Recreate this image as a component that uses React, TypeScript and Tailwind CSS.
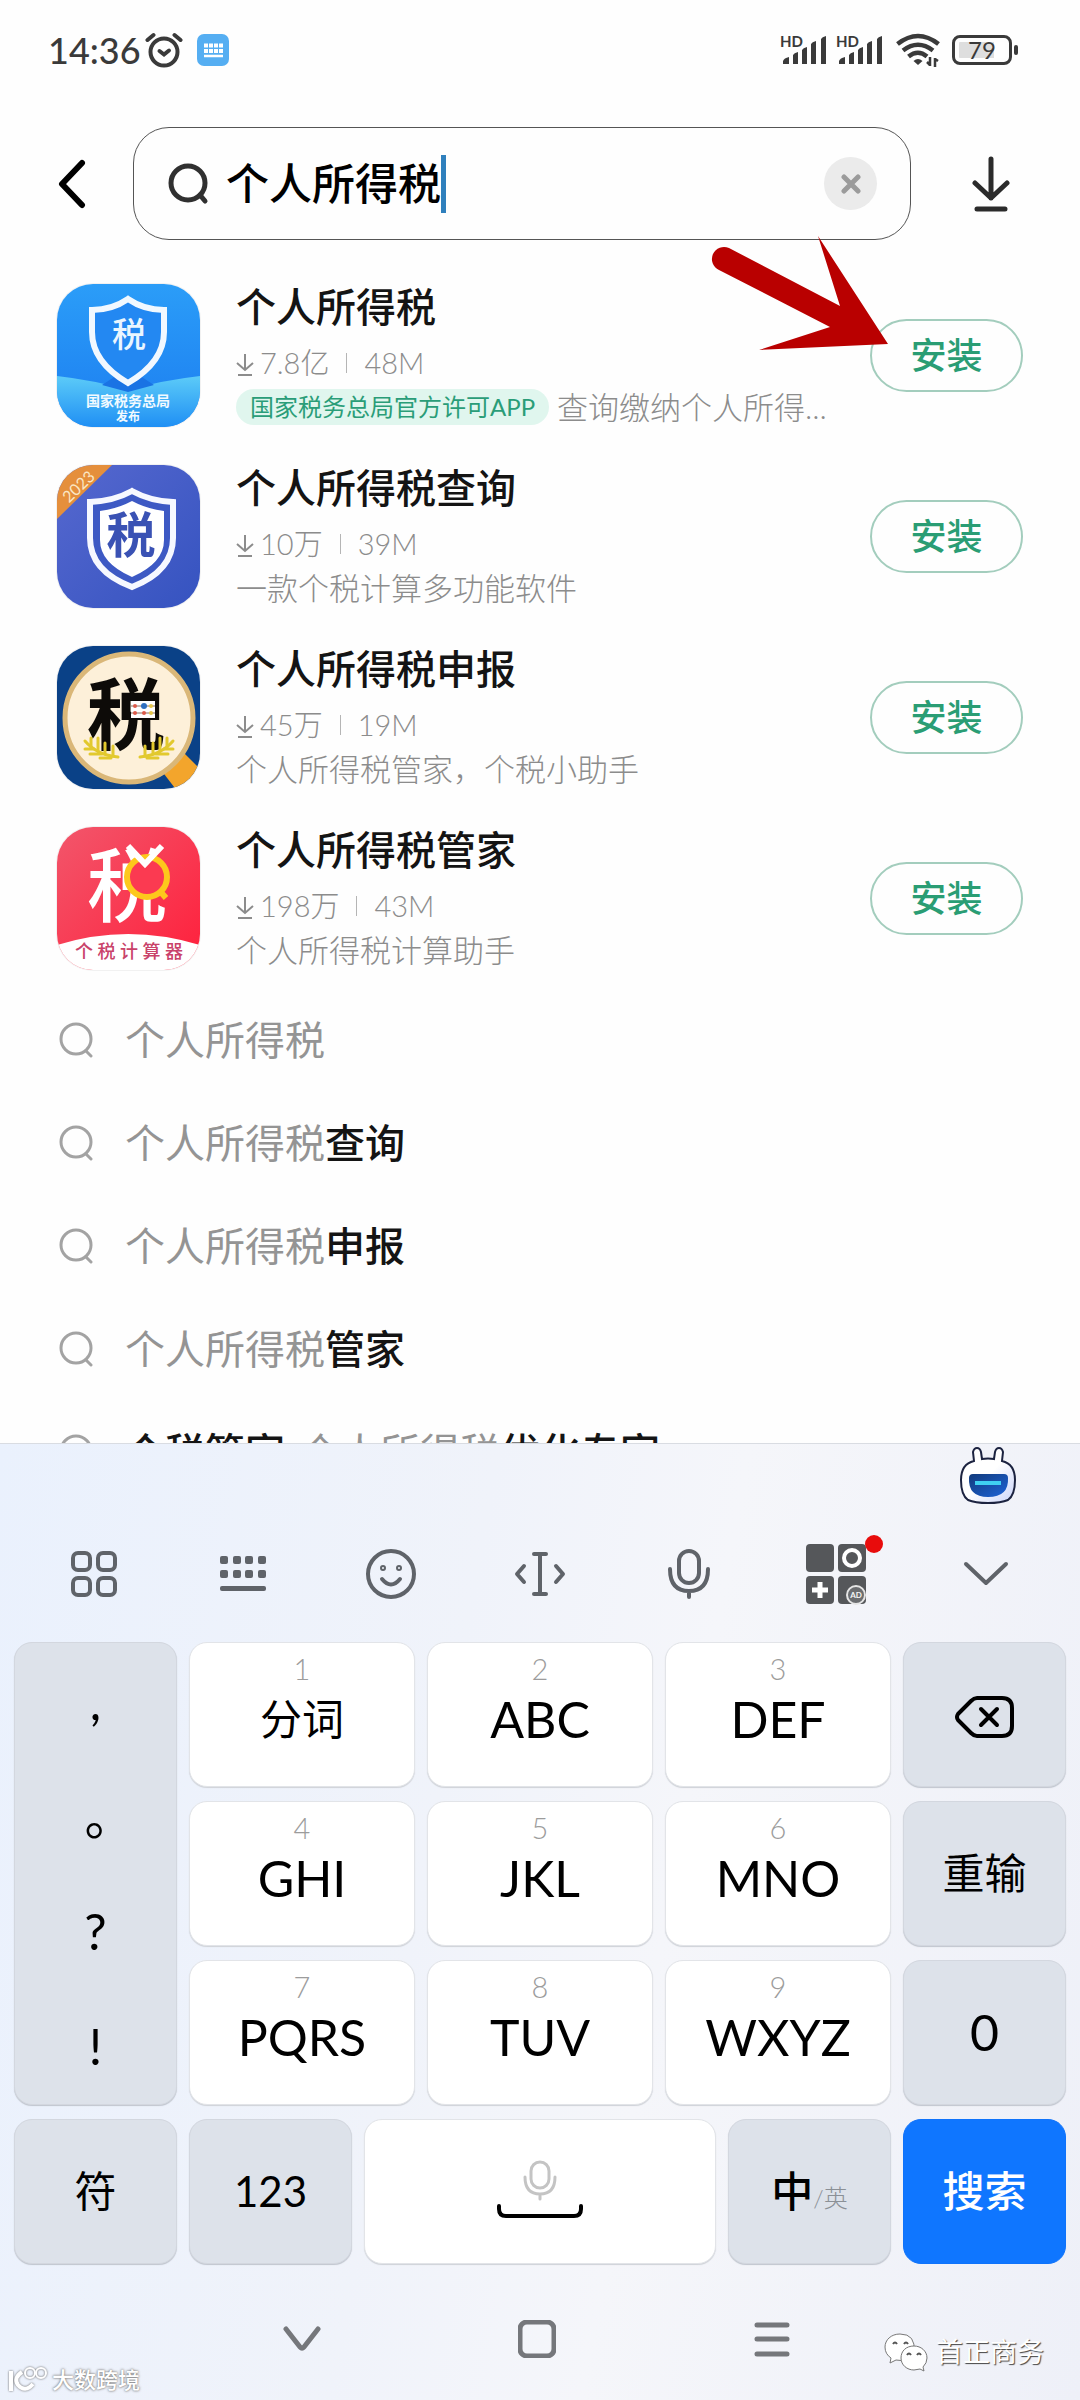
// src/App.tsx
import { useState } from "react";
import type { ReactNode } from "react";
import clsx from "clsx";

type AppItem = {
  name: string;
  downloads: string;
  size: string;
  desc: string;
  badge?: string;
  icon: ReactNode;
};

const FONT = "font-['Lato','Noto_Sans_CJK_SC',sans-serif]";

/* ---------- app icons ---------- */

function OfficialTaxIcon() {
  return (
    <svg viewBox="0 0 143 143" className="size-full" aria-hidden="true">
      <defs>
        <linearGradient id="tax-bg" x1="0" y1="0" x2="0" y2="1">
          <stop offset="0" stopColor="#2b9df8" />
          <stop offset="1" stopColor="#1c7df0" />
        </linearGradient>
        <linearGradient id="tax-wave" x1="0" y1="0" x2="0" y2="1">
          <stop offset="0" stopColor="#5ccbf8" />
          <stop offset="1" stopColor="#1f8ff4" />
        </linearGradient>
      </defs>
      <rect width="143" height="143" fill="url(#tax-bg)" />
      <path d="M0 92Q36 96 71 106Q107 96 143 92V143H0Z" fill="url(#tax-wave)" />
      <path d="M45 101L71 84L97 101L71 108Z" fill="#1a73e4" />
      <path
        d="M71 15Q87 26 107 26V48Q107 78 71 99Q35 78 35 48V26Q55 26 71 15Z"
        fill="#2388f2"
        stroke="#f1f8ff"
        strokeWidth="6"
      />
      <text x="72" y="63" textAnchor="middle" fontSize="34" fontWeight="500" fill="#eaf6ff">
        税
      </text>
      <text x="71" y="122" textAnchor="middle" fontSize="14" fontWeight="700" fill="#f2faff">
        国家税务总局
      </text>
      <text x="71" y="137" textAnchor="middle" fontSize="12" fontWeight="700" fill="#f2faff">
        发布
      </text>
    </svg>
  );
}

function QueryTaxIcon() {
  return (
    <svg viewBox="0 0 143 143" className="size-full" aria-hidden="true">
      <defs>
        <linearGradient id="query-bg" x1="0" y1="0" x2="1" y2="1">
          <stop offset="0" stopColor="#5668cf" />
          <stop offset="1" stopColor="#3553c0" />
        </linearGradient>
      </defs>
      <rect width="143" height="143" fill="url(#query-bg)" />
      <path d="M0 0H55L0 54Z" fill="#e58f3c" />
      <text
        x="22"
        y="27"
        textAnchor="middle"
        fontSize="16"
        fill="#fbe6c4"
        transform="rotate(-44 22 22)"
      >
        2023
      </text>
      <path
        d="M75 26Q93 36 116 37V73Q116 106 75 122Q33 106 33 73V37Q57 36 75 26Z"
        fill="#3d59c4"
        stroke="#f6f8ff"
        strokeWidth="6"
      />
      <path d="M75 36Q90 44 107 46V75Q107 98 75 112Q43 98 43 75V46Q60 44 75 36Z" fill="#fff" />
      <text x="74" y="88" textAnchor="middle" fontSize="49" fontWeight="700" fill="#3a52b4">
        税
      </text>
    </svg>
  );
}

function DeclareTaxIcon() {
  return (
    <svg viewBox="0 0 143 143" className="size-full" aria-hidden="true">
      <rect width="143" height="143" fill="#0a4187" />
      <path d="M104 124L126 106L150 130L124 150Z" fill="#f3a52c" />
      <circle cx="72" cy="72" r="64" fill="#fdf0d9" stroke="#dab778" strokeWidth="5" />
      <text x="69" y="98" textAnchor="middle" fontSize="78" fontWeight="700" fill="#0d0b08">
        税
      </text>
      <rect x="74" y="55" width="24" height="17" fill="#fff" />
      <path d="M74 60H98M74 67H98" stroke="#8a6a5a" strokeWidth="1" />
      <g fill="#dd5a4a">
        <circle cx="78" cy="60" r="2" />
        <circle cx="78" cy="67" r="2" />
      </g>
      <circle cx="87" cy="60" r="3" fill="#2f6fc0" />
      <circle cx="87" cy="67" r="2" fill="#dd5a4a" />
      <g fill="#e6c74a">
        <circle cx="94" cy="60" r="2" />
        <circle cx="94" cy="67" r="2" />
      </g>
      <g stroke="#e2c92e" strokeWidth="3" strokeLinecap="round" fill="none">
        <path d="M28 95Q40 109 61 111" />
        <path d="M34 92V101M41 92V105M48 97V108M56 100V110M28 103L37 103M33 108L45 108M43 112L54 112" />
        <path d="M116 95Q104 109 83 111" />
        <path d="M110 92V101M103 92V105M96 97V108M88 100V110M116 103L107 103M111 108L99 108M101 112L90 112" />
      </g>
    </svg>
  );
}

function ManagerTaxIcon() {
  return (
    <svg viewBox="0 0 143 143" className="size-full" aria-hidden="true">
      <defs>
        <linearGradient id="manager-bg" x1="0" y1="0" x2="1" y2="1">
          <stop offset="0" stopColor="#f2566b" />
          <stop offset="1" stopColor="#ff1f3b" />
        </linearGradient>
      </defs>
      <rect width="143" height="143" fill="url(#manager-bg)" />
      <text x="70" y="88" textAnchor="middle" fontSize="80" fontWeight="500" fill="#fff">
        税
      </text>
      <circle cx="90" cy="50" r="20" fill="#fb3a51" stroke="#fdc81c" strokeWidth="6" />
      <path d="M102 63L109 71" stroke="#fdc81c" strokeWidth="6" />
      <path d="M71 19L88 37L105 19" fill="none" stroke="#fff" strokeWidth="6" />
      <path d="M0 118Q71 96 143 118V143H0Z" fill="#fff" />
      <text x="72" y="131" textAnchor="middle" fontSize="18" fontWeight="500" fill="#c9426a">
        个 税 计 算 器
      </text>
    </svg>
  );
}

const apps: AppItem[] = [
  {
    name: "个人所得税",
    downloads: "7.8亿",
    size: "48M",
    badge: "国家税务总局官方许可APP",
    desc: "查询缴纳个人所得...",
    icon: <OfficialTaxIcon />,
  },
  {
    name: "个人所得税查询",
    downloads: "10万",
    size: "39M",
    desc: "一款个税计算多功能软件",
    icon: <QueryTaxIcon />,
  },
  {
    name: "个人所得税申报",
    downloads: "45万",
    size: "19M",
    desc: "个人所得税管家，个税小助手",
    icon: <DeclareTaxIcon />,
  },
  {
    name: "个人所得税管家",
    downloads: "198万",
    size: "43M",
    desc: "个人所得税计算助手",
    icon: <ManagerTaxIcon />,
  },
];

const suggestions = [
  { before: "", match: "个人所得税", after: "" },
  { before: "", match: "个人所得税", after: "查询" },
  { before: "", match: "个人所得税", after: "申报" },
  { before: "", match: "个人所得税", after: "管家" },
  { before: "个税管家-", match: "个人所得税", after: "优化专家" },
];

/* ---------- status bar ---------- */

function Signal() {
  return (
    <svg width="48" height="32" viewBox="0 0 48 32" fill="#3a3a3a" className="overflow-visible" aria-hidden="true">
      <text x="0" y="13" fontSize="15" fontWeight="700">
        HD
      </text>
      <path d="M3 30V27Q4 24 9 23V30Z" />
      <path d="M13 30V21Q14 19 18 18V30Z" />
      <path d="M22 30V16Q23 14 27 13V30Z" />
      <path d="M31 30V10Q32 8 36 7V30Z" />
      <path d="M41 30V5Q42 3 46 2V30Z" />
    </svg>
  );
}

function StatusBar() {
  return (
    <div className="flex h-[100px] items-center px-12 pr-[62px] text-[#3a3a3a]">
      <span className="text-4xl font-medium">14:36</span>
      <svg width="38" height="36" viewBox="0 0 38 36" className="ml-1" fill="none" stroke="#3a3a3a" strokeWidth="4" strokeLinecap="round" aria-hidden="true">
        <circle cx="19" cy="20" r="13.5" />
        <path d="M14.500 19L19 22.500L24 18.500" />
        <path d="M2.500 8L8.500 3M29.500 3L35.500 8" />
      </svg>
      <svg width="32" height="32" viewBox="0 0 32 32" className="ml-3.5" aria-hidden="true">
        <rect width="32" height="32" rx="7" fill="#55aef2" />
        <path d="M7 11.500H26M7 17H26" stroke="#fff" strokeWidth="4" strokeDasharray="4 1" />
        <path d="M7 22H26" stroke="#fff" strokeWidth="2.500" />
      </svg>
      <div className="ml-auto flex items-center gap-2">
        <Signal />
        <Signal />
        <svg width="44" height="34" viewBox="0 0 44 34" className="ml-1" fill="none" stroke="#3a3a3a" strokeWidth="4.500" aria-hidden="true">
          <path d="M1.500 11Q22 -5 42.500 11" />
          <path d="M7 17.500Q22 6 37 17.500" />
          <path d="M12.500 23.500Q22 16 31 23.500" />
          <path d="M17.500 28Q22 24 26.500 28L22 32Z" fill="#3a3a3a" stroke="none" />
          <path d="M34 24V33M31 29L34 32M39 34V25M42 28L39 26" strokeWidth="2.500" />
        </svg>
        <div className="ml-1 flex items-center gap-0.5">
          <span className="flex h-[30px] w-[60px] items-center justify-center rounded-lg border-3 border-[#3a3a3a] bg-[linear-gradient(90deg,#dedede_72%,#fff_72%)] bg-clip-content p-1 text-2xl leading-none">
            79
          </span>
          <span className="h-2.5 w-1 rounded-sm bg-[#3a3a3a]" />
        </div>
      </div>
    </div>
  );
}

/* ---------- search header ---------- */

function SearchHeader() {
  const [query, setQuery] = useState("个人所得税");

  return (
    <header className="mt-[27px] flex items-center pr-[70px] pl-[57px]">
      <button type="button" aria-label="返回">
        <svg width="30" height="50" viewBox="0 0 30 50" fill="none" stroke="#000" strokeWidth="6" strokeLinecap="round" strokeLinejoin="round">
          <path d="M25 4L5 25L25 46" />
        </svg>
      </button>
      <div className="mr-[61px] ml-[46px] flex h-[113px] flex-1 items-center rounded-[36px] border border-[#555] pr-[33px] pl-[34px]">
        <svg width="42" height="42" viewBox="0 0 42 42" fill="none" stroke="#303030" strokeWidth="5" strokeLinecap="round" aria-hidden="true">
          <circle cx="20" cy="20" r="17" />
          <path d="M32 32L37 38" />
        </svg>
        <input
          aria-label="搜索应用"
          value={query}
          onChange={(e) => setQuery(e.target.value)}
          className="ml-4 w-[215px] text-[43px] leading-[60px] font-medium text-black outline-none"
        />
        <span className="h-[58px] w-[5px] bg-[#2f80bd]" />
        <button type="button" aria-label="清除" onClick={() => setQuery("")} className="ml-auto flex size-[53px] items-center justify-center rounded-full bg-[#ebebeb]">
          <svg width="20" height="20" viewBox="0 0 20 20" stroke="#9b9b9b" strokeWidth="5" strokeLinecap="round">
            <path d="M3 3L17 17M17 3L3 17" />
          </svg>
        </button>
      </div>
      <button type="button" aria-label="下载管理">
        <svg width="38" height="56" viewBox="0 0 38 56" fill="none" stroke="#2b2b2b" strokeWidth="5" strokeLinecap="round" strokeLinejoin="round">
          <path d="M19 3V42M3 27L19 42L35 27M5 53H33" />
        </svg>
      </button>
    </header>
  );
}

/* ---------- results ---------- */

function AppRow({ app }: { app: AppItem }) {
  return (
    <li className="flex items-center">
      <div className="size-[143px] shrink-0 overflow-hidden rounded-[36px] ring-1 ring-black/5">
        {app.icon}
      </div>
      <div className="ml-9 min-w-0 flex-1">
        <h2 className="text-[40px] leading-12 font-medium text-[#141414]">{app.name}</h2>
        <div className="mt-3 flex items-center text-[29px] leading-10 font-light text-[#8c8c8c]">
          <svg width="18" height="24" viewBox="0 0 18 24" className="mt-1 mr-1.5" fill="none" stroke="#8c8c8c" strokeWidth="2" aria-hidden="true">
            <path d="M9 1V17M1 10L9 17L17 10M2 22H16" />
          </svg>
          {app.downloads}
          <span className="mx-[17px] h-5 w-px bg-[#b5b5b5]" />
          {app.size}
        </div>
        <div className="mt-1 flex items-center text-[31px] leading-10 font-light whitespace-nowrap text-[#8c8c8c]">
          {app.badge && (
            <span className="mr-2 rounded-full bg-[#e0f6ee] px-3.5 text-2xl leading-9 font-normal text-[#2a9d78]">
              {app.badge}
            </span>
          )}
          {app.desc}
        </div>
      </div>
      <button type="button" className="h-[73px] w-[153px] rounded-full border-2 border-[#a3cdbd] text-4xl font-medium text-[#2a9d74]">
        安装
      </button>
    </li>
  );
}

function SuggestionRow({ before, match, after }: (typeof suggestions)[number]) {
  return (
    <li>
      <button type="button" className="flex h-[103px] w-full items-center text-left text-[40px] font-medium text-[#141414]">
        <svg width="34" height="38" viewBox="0 0 34 38" className="mr-8 ml-0.5" fill="none" stroke="#a3a3a3" strokeWidth="3" strokeLinecap="round" aria-hidden="true">
          <circle cx="17" cy="18" r="15" />
          <path d="M27 30L32 35" />
        </svg>
        {before}
        <span className="font-normal text-[#949494]">{match}</span>
        {after}
      </button>
    </li>
  );
}

// 指向第一个安装按钮的红色箭头
function PointerArrow() {
  return (
    <svg width="180" height="120" viewBox="0 0 180 120" className="pointer-events-none absolute top-[234px] right-[190px]" aria-hidden="true">
      <path
        d="M19 14L130 72L108 2L178 110L49 116L120 93L9 36A12 12 0 0 1 19 14Z"
        fill="#b90000"
      />
    </svg>
  );
}

/* ---------- keyboard ---------- */

const ICON_GRAY = "#5f6369";

function Robot() {
  return (
    <svg width="56" height="57" viewBox="0 0 56 57" aria-hidden="true">
      <defs>
        <linearGradient id="robot-face" x1="0" y1="0" x2="1" y2="1">
          <stop offset="0.5" stopColor="#fff" />
          <stop offset="1" stopColor="#c9d3fa" />
        </linearGradient>
        <linearGradient id="robot-screen" x1="0" y1="0" x2="1" y2="1">
          <stop offset="0" stopColor="#123b7c" />
          <stop offset="1" stopColor="#1d63d8" />
        </linearGradient>
      </defs>
      <path
        d="M14 14L13 5Q14 1 17 1Q20 1 21 5L22 12Q28 11 34 12L35 5Q36 1 39 1Q42 1 43 5L42 14Q55 17 55 33Q55 48 48 53Q41 56 28 56Q15 56 8 53Q1 48 1 33Q1 17 14 14Z"
        fill="url(#robot-face)"
        stroke="#1c2340"
        strokeWidth="2"
      />
      <path d="M13 27H44Q48 27 48 31Q49 50 28 50Q8 50 9 31Q9 27 13 27Z" fill="url(#robot-screen)" />
      <path d="M15 36H41" stroke="#3fd0f2" strokeWidth="4" />
    </svg>
  );
}

const tools: { label: string; icon: ReactNode }[] = [
  {
    label: "工具",
    icon: (
      <svg width="48" height="48" viewBox="0 0 48 48" fill="none" stroke={ICON_GRAY} strokeWidth="4">
        <rect x="3" y="3" width="17" height="17" rx="5" />
        <rect x="28" y="3" width="17" height="17" rx="5" />
        <rect x="3" y="28" width="17" height="17" rx="5" />
        <rect x="28" y="28" width="17" height="17" rx="5" />
      </svg>
    ),
  },
  {
    label: "键盘切换",
    icon: (
      <svg width="48" height="36" viewBox="0 0 48 36" fill={ICON_GRAY}>
        {[1, 14, 26, 39].map((x) => (
          <g key={x}>
            <rect x={x} y="0" width="8" height="8" rx="2" />
            <rect x={x} y="14" width="8" height="8" rx="2" />
          </g>
        ))}
        <rect x="1" y="30" width="46" height="5" rx="2" />
      </svg>
    ),
  },
  {
    label: "表情",
    icon: (
      <svg width="50" height="50" viewBox="0 0 50 50" fill="none" stroke={ICON_GRAY} strokeWidth="4" strokeLinecap="round">
        <circle cx="25" cy="25" r="23" />
        <path d="M16 30Q25 41 34 30" />
        <circle cx="17" cy="19" r="1" />
        <circle cx="33" cy="19" r="1" />
      </svg>
    ),
  },
  {
    label: "光标",
    icon: (
      <svg width="52" height="44" viewBox="0 0 52 44" fill="none" stroke={ICON_GRAY} strokeWidth="4" strokeLinecap="round" strokeLinejoin="round">
        <path d="M10 14L3 22L10 30M42 14L49 22L42 30M26 2V42M20 2H32M20 42H32" />
      </svg>
    ),
  },
  {
    label: "语音输入",
    icon: (
      <svg width="44" height="50" viewBox="0 0 44 50" fill="none" stroke={ICON_GRAY} strokeWidth="4" strokeLinecap="round">
        <rect x="12" y="2" width="20" height="32" rx="10" />
        <path d="M3 20Q3 42 22 42Q41 42 41 20M22 42V48" />
      </svg>
    ),
  },
  {
    label: "推荐",
    icon: (
      <svg width="80" height="80" viewBox="0 0 80 80">
        <g fill="#55575a">
          <rect x="9" y="10" width="28" height="28" rx="4" />
          <rect x="41" y="10" width="28" height="28" rx="4" />
          <rect x="9" y="42" width="28" height="28" rx="4" />
          <rect x="41" y="42" width="28" height="28" rx="4" />
        </g>
        <circle cx="55" cy="24" r="8" fill="none" stroke="#fff" strokeWidth="4" />
        <path d="M23 48V64M15 56H31" stroke="#fff" strokeWidth="5" />
        <circle cx="59" cy="61" r="9" fill="#6b6d70" stroke="#e5e5e5" strokeWidth="2" />
        <text x="59" y="64" textAnchor="middle" fontSize="8" fontWeight="700" fill="#f5f5f5">
          AD
        </text>
        <circle cx="77" cy="10" r="9" fill="#e80c0c" />
      </svg>
    ),
  },
  {
    label: "收起键盘",
    icon: (
      <svg width="46" height="26" viewBox="0 0 46 26" fill="none" stroke={ICON_GRAY} strokeWidth="4" strokeLinecap="round" strokeLinejoin="round">
        <path d="M3 3L23 22L43 3" />
      </svg>
    ),
  },
];

function Key({
  children,
  tone = "gray",
  label,
  className,
}: {
  children: ReactNode;
  tone?: "gray" | "white" | "blue";
  label?: string;
  className?: string;
}) {
  return (
    <button
      type="button"
      aria-label={label}
      className={clsx(
        "flex h-[145px] items-center justify-center rounded-[18px] border",
        tone === "gray" && "border-[#d3d7df] bg-[#dde2ea] text-black shadow-[0_1px_1px_#c0c5ce]",
        tone === "white" && "border-[#e2e4e8] bg-white text-black shadow-[0_1px_1px_#cfd2d8]",
        tone === "blue" && "border-[#0f73fb] bg-[#0f76ff] text-white",
        className
      )}
    >
      {children}
    </button>
  );
}

function LetterKey({ digit, letters }: { digit: string; letters: string }) {
  return (
    <Key tone="white" className="flex-col justify-start">
      <span className="mt-1.5 text-[29px] leading-10 font-light text-[#9c9c9c]">{digit}</span>
      <span
        className={clsx(
          "leading-[60px]",
          letters === "分词" ? "text-[42px]" : "text-[50px]"
        )}
      >
        {letters}
      </span>
    </Key>
  );
}

function Keyboard() {
  return (
    <section
      aria-label="键盘"
      className="relative shrink-0 border-t border-[#d9dce2] bg-[linear-gradient(100deg,#eaf1fd_0%,#f0f3fa_40%,#f5f6fa_60%,#eef0f8_100%)]"
    >
      <div className="flex h-[61px] justify-end pt-[3px] pr-16">
        <Robot />
      </div>
      <div className="grid h-[137px] grid-cols-7 px-5">
        {tools.map((tool) => (
          <button key={tool.label} type="button" aria-label={tool.label} className="flex items-center justify-center">
            <span className="[&>svg]:overflow-visible">{tool.icon}</span>
          </button>
        ))}
      </div>

      <div className="grid grid-cols-[163fr_226fr_226fr_226fr_163fr] gap-x-3 gap-y-3.5 px-3.5">
        <div className="row-span-3 grid grid-rows-4 rounded-[18px] border border-[#d3d7df] bg-[#dde2ea] text-[50px] leading-none shadow-[0_1px_1px_#c0c5ce]">
          <button type="button">,</button>
          <button type="button" className="pl-7">。</button>
          <button type="button">?</button>
          <button type="button">!</button>
        </div>
        <LetterKey digit="1" letters="分词" />
        <LetterKey digit="2" letters="ABC" />
        <LetterKey digit="3" letters="DEF" />
        <Key label="删除" className="pt-1">
          <svg width="62" height="44" viewBox="0 0 62 44" fill="none" stroke="#000" strokeWidth="4" strokeLinecap="round" strokeLinejoin="round">
            <path d="M23 3H48Q58 3 58 13V31Q58 41 48 41H23Q20 41 17 38L4 25Q2 22 4 19L17 6Q20 3 23 3Z" />
            <path d="M27 14L43 30M43 14L27 30" />
          </svg>
        </Key>
        <LetterKey digit="4" letters="GHI" />
        <LetterKey digit="5" letters="JKL" />
        <LetterKey digit="6" letters="MNO" />
        <Key className="text-[42px]">重输</Key>
        <LetterKey digit="7" letters="PQRS" />
        <LetterKey digit="8" letters="TUV" />
        <LetterKey digit="9" letters="WXYZ" />
        <Key className="text-[50px]">0</Key>
      </div>

      <div className="mt-3.5 grid grid-cols-[163fr_163fr_352fr_163fr_163fr] gap-3 px-3.5">
        <Key className="text-[42px]">符</Key>
        <Key className="text-[42px]">123</Key>
        <Key tone="white" label="空格" className="pb-1">
          <svg width="88" height="60" viewBox="0 0 88 60" fill="none" strokeLinecap="round">
            <g stroke="#c4c4c4" strokeWidth="3">
              <rect x="35" y="2" width="18" height="26" rx="9" />
              <path d="M29 17Q29 34 44 34Q59 34 59 17M44 34V39" />
            </g>
            <path d="M3 46V49Q3 56 10 56H78Q85 56 85 49V46" stroke="#000" strokeWidth="4" />
          </svg>
        </Key>
        <Key className="text-[42px]">
          <span className="flex items-baseline font-medium">
            中<span className="text-2xl font-light text-[#8b9096]">/英</span>
          </span>
        </Key>
        <Key tone="blue" className="text-[42px] font-medium">
          搜索
        </Key>
      </div>

      <nav className="flex items-center justify-center gap-[197px] pt-14 pr-1.5 pb-[42px]">
        <button type="button" aria-label="收起">
          <svg width="38" height="38" viewBox="0 0 38 38" fill="none" stroke="#75777b" strokeWidth="5" strokeLinecap="round" strokeLinejoin="round">
            <path d="M3 9L17 27Q19 29 21 27L35 9" />
          </svg>
        </button>
        <button type="button" aria-label="主页">
          <svg width="38" height="38" viewBox="0 0 38 38" fill="none" stroke="#75777b" strokeWidth="5">
            <rect x="2" y="2" width="34" height="34" rx="7" />
          </svg>
        </button>
        <button type="button" aria-label="最近任务">
          <svg width="38" height="38" viewBox="0 0 38 38" stroke="#75777b" strokeWidth="5" strokeLinecap="round">
            <path d="M4 5H34M4 19H34M4 34H34" />
          </svg>
        </button>
      </nav>

      {/* watermarks */}
      <div className="absolute bottom-1 left-2 flex items-center gap-1 text-[22px] leading-8 font-medium text-white [text-shadow:0_0_2px_#777,0_0_3px_#999]">
        <svg width="40" height="28" viewBox="0 0 40 28" fill="none" stroke="#fff" strokeWidth="3" className="drop-shadow-[0_0_1px_#666]" aria-hidden="true">
          <path d="M3 5V25M14 6Q5 12 10 19Q17 27 25 18" strokeWidth="4" />
          <circle cx="22" cy="7" r="5" strokeWidth="2" />
          <circle cx="33" cy="7" r="5" strokeWidth="2" />
        </svg>
        大数跨境
      </div>
      <div className="absolute right-9 bottom-7 flex items-center gap-2 text-[27px] leading-10 text-white [text-shadow:1px_1px_1px_#444]">
        <svg width="44" height="40" viewBox="0 0 44 40" fill="#fff" stroke="#777" strokeWidth="1" aria-hidden="true">
          <path d="M16 2C7 2 1 8 1 15Q1 22 7 26L6 31L12 28Q26 31 30 20Q32 2 16 2Z" />
          <path d="M30 14C22 14 17 19 17 26C17 33 23 38 30 38L36 37L40 39L39 35Q43 31 43 26C43 19 37 14 30 14Z" />
          <path d="M9 12Q11 9 13 12M20 12Q22 9 24 12M23 23Q25 20 27 23M33 23Q35 20 37 23" fill="none" stroke="#555" strokeWidth="2" />
        </svg>
        首正商务
      </div>
    </section>
  );
}

function App() {
  return (
    <div className={`relative flex h-screen flex-col overflow-hidden bg-[#fefefe] ${FONT}`}>
      <main className="min-h-0 flex-1 overflow-hidden">
        <StatusBar />
        <SearchHeader />
        <ul className="mt-[43px] flex flex-col gap-[37px] px-[57px]">
          {apps.map((app) => (
            <AppRow key={app.name} app={app} />
          ))}
        </ul>
        <ul className="mt-[18px] px-[57px]">
          {suggestions.map((item) => (
            <SuggestionRow key={item.before + item.after} {...item} />
          ))}
        </ul>
      </main>
      <PointerArrow />
      <Keyboard />
    </div>
  );
}

export default App;
